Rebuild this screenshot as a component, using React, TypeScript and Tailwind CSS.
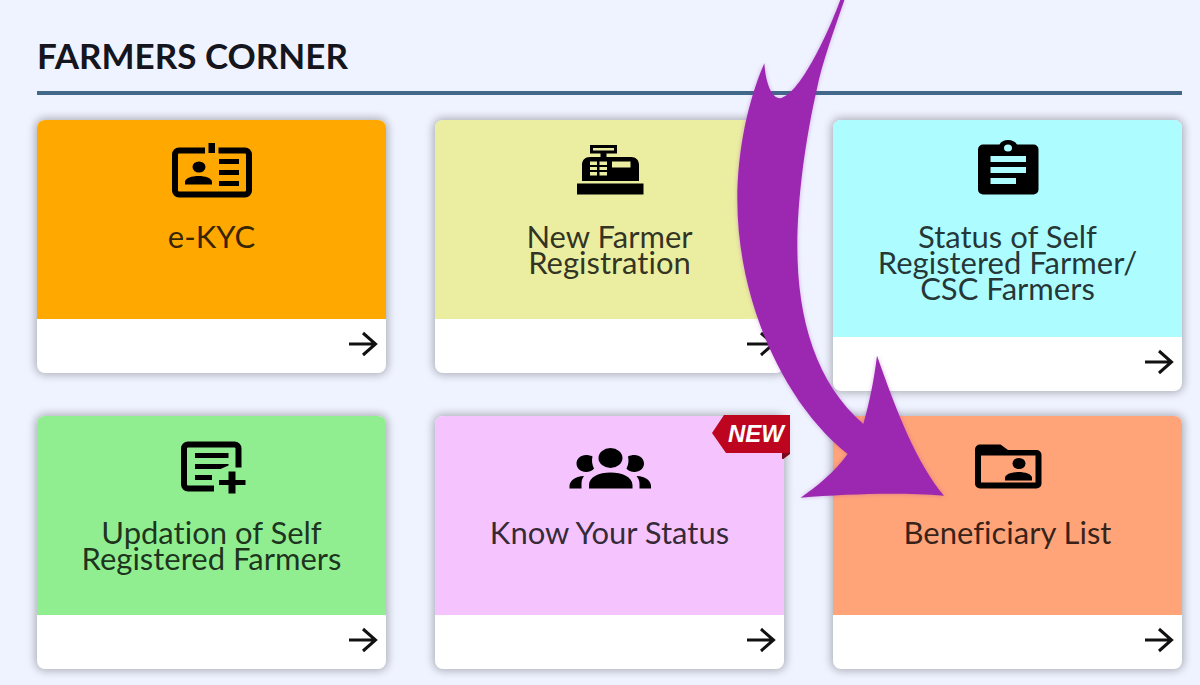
import React from 'react';

interface Service {
  title: string[];
  color: string;
  icon: React.ReactNode;
  isNew?: boolean;
}

const IdCardIcon = () => (
  <>
    <path
      d="M35 10.5H9a4 4 0 0 0-4 4v36a4 4 0 0 0 4 4h66a4 4 0 0 0 4-4v-36a4 4 0 0 0-4-4H48.5"
      fill="none"
      stroke="currentColor"
      strokeWidth="6"
    />
    <path d="M38.500 3H45v10h-6.500zM49 19h20v5H49zM49 30h20v5H49zM49 41h20v5H49z" />
    <ellipse cx="29" cy="27" rx="6.500" ry="5.500" />
    <path d="M15 44.500v-2.500c0-4 7-6 13.500-6S42 38 42 42v2.500z" />
  </>
);

const RegisterIcon = () => (
  <>
    <path d="M23.500 6.500h24v5.500h-24z" fill="none" stroke="currentColor" strokeWidth="3" />
    <path d="M32.500 12.500h6V18h-6z" />
    <path
      fillRule="evenodd"
      d="M14 41V25c0-5 3-8 8-8h41c5 0 8 3 8 8v16zM22 21.500V25h7v-3.500zM31.500 21.500V25H39v-3.500zM22 27v3h7v-3zM31.500 27v3H39v-3zM22 32v3.500h7V32zM31.500 32v3.500H39V32zM44 21.500v6h18.500v-6z"
    />
    <path d="M9 43.500h66.500v11H9z" />
  </>
);

const ClipboardIcon = () => (
  <path
    fillRule="evenodd"
    d="M17 4.500h16.500C35 1.500 38 0 42 0s7.500 1.500 9 4.500h16.500a5 5 0 0 1 5 5v40a5 5 0 0 1-5 5H17a5 5 0 0 1-5-5v-40a5 5 0 0 1 5-5zM42 4.500a4 3.500 0 1 0 0 7 4 3.500 0 1 0 0-7zM24.500 16v6H60v-6zM24.500 27v6H60v-6zM24.500 38v6H50v-6z"
  />
);

const ListAddIcon = () => (
  <>
    <path
      d="M68.500 31.500V12.500a4 4 0 0 0-4-4H18a4 4 0 0 0-4 4v36a4 4 0 0 0 4 4h26"
      fill="none"
      stroke="currentColor"
      strokeWidth="6"
    />
    <path d="M25 17h33.500v5H25zM25 28h33.500v1.500l-8 3.500H25zM25 39h17v5H25z" />
    <path d="M58.500 35.500h7V44h10v5h-10v8.500h-7V49H49v-5h9.500z" />
  </>
);

const GroupIcon = () => (
  <>
    <ellipse cx="42.500" cy="22" rx="12" ry="10" />
    <path d="M24.500 20.500c-2-1-4-1.500-6.500-1.500-5.500 0-9.500 4-9.500 8.500S12.500 36 18 36c3.500 0 6.500-1.500 8-3.500-2-4-2.500-8-1.500-12zM60 20.500c2-1 4-1.500 6.500-1.500 5.500 0 9.500 4 9.500 8.500S72 36 66.500 36c-3.500 0-6.500-1.500-8-3.500 2-4 2.500-8 1.500-12z" />
    <path d="M21 52.500V49c0-8 10-12.500 21.500-12.500S64.500 41 64.500 49v3.500zM1.500 52.500V50c0-5 5.500-9.500 14.500-10-2 2.500-2.500 5-2.500 8v4.500zM83 52.500V50c0-5-5-9.500-14.500-10 2 2.500 3 5 3 8v4.500z" />
  </>
);

const FolderIcon = () => (
  <>
    <path
      fillRule="evenodd"
      d="M14 8.500h20.500l7.500 5.500h28.500a5 5 0 0 1 5 5v28.500a5 5 0 0 1-5 5H14a5 5 0 0 1-5-5v-34a5 5 0 0 1 5-5zM15 19.500v27h54.500v-27z"
    />
    <ellipse cx="53" cy="27.500" rx="6.500" ry="5.500" />
    <path d="M39 44.500V42c0-4 7-6 13.500-6S66 38 66 42v2.500z" />
  </>
);

const services: Service[] = [
  { title: ['e-KYC'], color: 'bg-[#ffa800]', icon: <IdCardIcon /> },
  { title: ['New Farmer', 'Registration'], color: 'bg-[#ebeea1]', icon: <RegisterIcon /> },
  {
    title: ['Status of Self', 'Registered Farmer/', 'CSC Farmers'],
    color: 'bg-[#adfcff]',
    icon: <ClipboardIcon />,
  },
  {
    title: ['Updation of Self', 'Registered Farmers'],
    color: 'bg-[#90ee90]',
    icon: <ListAddIcon />,
  },
  { title: ['Know Your Status'], color: 'bg-[#f5c3fd]', icon: <GroupIcon />, isNew: true },
  { title: ['Beneficiary List'], color: 'bg-[#ffa379]', icon: <FolderIcon /> },
];

const NewBadge = () => (
  <span className="absolute -top-px -right-1.5 flex h-11 w-[78px] items-start justify-end">
    <svg viewBox="0 0 78 44" className="absolute inset-0 h-full w-full" aria-hidden="true">
      <path d="M70 37h8v2l-8 6z" fill="#7d0716" />
      <path d="M0 18L12 0h66v38H14z" fill="#bd0520" />
    </svg>
    <span className="relative pr-1.5 font-['Liberation_Sans',sans-serif] text-2xl leading-[38px] font-bold text-white italic">
      NEW
    </span>
  </span>
);

const ServiceCard: React.FC<{ service: Service }> = ({ service }) => (
  <a
    href="#"
    className="relative block rounded-lg bg-white shadow-[0_0_8px_2px_rgba(0,0,0,0.28)]"
  >
    <div
      className={`flex min-h-[199px] flex-col items-center rounded-t-lg pt-5 pb-9 text-center ${service.color}`}
    >
      <svg
        viewBox="0 0 84 60"
        fill="currentColor"
        className="h-[60px] w-[84px] text-black"
        aria-hidden="true"
      >
        {service.icon}
      </svg>
      <h3 className="mt-[23px] text-[31px] leading-[26px] text-black/80 [font-variant-ligatures:none]">
        {service.title.map((line) => (
          <span key={line} className="block whitespace-nowrap">
            {line}
          </span>
        ))}
      </h3>
    </div>
    <div className="flex h-[54px] items-center justify-end pr-2 pb-1">
      <svg
        viewBox="0 0 30 26"
        fill="none"
        stroke="#111"
        strokeWidth="3"
        className="h-[26px] w-[30px]"
        aria-hidden="true"
      >
        <path d="M1 13h26M15 2l12.500 11L15 24" />
      </svg>
    </div>
    {service.isNew && <NewBadge />}
  </a>
);

// Curved pointer that leads to the Beneficiary List card
const PointerArrow = () => (
  <svg
    viewBox="0 0 780 1530"
    className="pointer-events-none absolute top-0 left-[700px] h-[510px] w-[260px] drop-shadow-[0_0_2px_rgba(156,39,176,0.35)]"
    aria-hidden="true"
  >
    <path
      fill="#9c27b0"
      d="M440 -20C408 75 368 180 350 270C318 410 292 590 292 740C292 960 350 1150 490 1272C510 1200 522 1140 531 1067C590 1235 650 1390 732 1487C600 1476 440 1482 302 1493C350 1460 405 1415 443 1362C250 1210 112 900 112 600C112 450 145 300 193 190C197 250 215 295 240 295C300 285 390 90 428 -20Z"
    />
  </svg>
);

export default function App() {
  return (
    <div className="relative min-h-screen overflow-hidden bg-[#eff3ff] pt-[39px] pr-[18px] pb-4 pl-[37px] font-['Lato',sans-serif]">
      <h2 className="border-b-4 border-[#42688a] pb-5 text-[35px] leading-8 font-bold text-[#15151d]">
        FARMERS CORNER
      </h2>
      <div className="mt-[25px] grid grid-cols-3 items-start gap-x-[49px] gap-y-[25px]">
        {services.map((service) => (
          <ServiceCard key={service.title[0]} service={service} />
        ))}
      </div>
      <PointerArrow />
    </div>
  );
}
